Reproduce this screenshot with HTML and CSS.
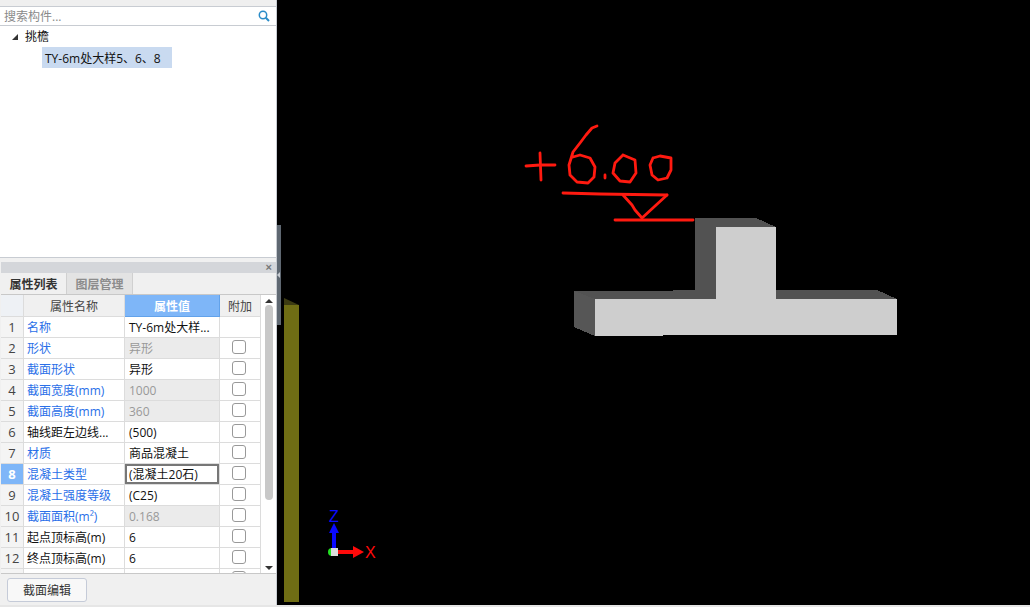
FILE: index.html
```html
<!DOCTYPE html>
<html lang="en">
<head>
  <meta charset="UTF-8" />
  <title>构件属性</title>
  <link rel="stylesheet" href="styles.css">
</head>
<body>
  <div class="main">
    <div class="side">
      <div class="top-strip"></div>
      <div class="search">
        <span class="search-text">搜索构件...</span>
        <svg class="search-icon" width="12" height="12" viewBox="0 0 12 12">
          <circle cx="5" cy="5" r="3.7" fill="none" stroke="#2a8cc8" stroke-width="1.5"/>
          <path d="M7.8 7.8 L11 11" stroke="#2a8cc8" stroke-width="2"/>
        </svg>
      </div>

      <div class="tree">
        <div class="tree-root"><span class="tree-arrow"></span>挑檐</div>
        <div class="tree-item">TY-6m处大样5、6、8</div>
      </div>

      <div class="panel-gap"></div>

      <div class="panel">
        <div class="panel-title"><span class="panel-close">×</span></div>
        <div class="tabs">
          <div class="tab active">属性列表</div>
          <div class="tab">图层管理</div>
        </div>

        <div class="grid-wrap">
          <div class="grid-clip">
            <table class="props">
              <colgroup>
                <col class="col-num"><col class="col-name"><col class="col-val"><col class="col-add">
              </colgroup>
              <tr class="head">
                <th></th><th>属性名称</th><th class="head-val">属性值</th><th>附加</th>
              </tr>
              <tr><td class="num">1</td><td class="name">名称</td><td class="val">TY-6m处大样...</td><td></td></tr>
              <tr><td class="num">2</td><td class="name">形状</td><td class="val off">异形</td><td class="add"><input type="checkbox"></td></tr>
              <tr><td class="num">3</td><td class="name">截面形状</td><td class="val">异形</td><td class="add"><input type="checkbox"></td></tr>
              <tr><td class="num">4</td><td class="name">截面宽度(mm)</td><td class="val off">1000</td><td class="add"><input type="checkbox"></td></tr>
              <tr><td class="num">5</td><td class="name">截面高度(mm)</td><td class="val off">360</td><td class="add"><input type="checkbox"></td></tr>
              <tr><td class="num">6</td><td class="name plain">轴线距左边线...</td><td class="val">(500)</td><td class="add"><input type="checkbox"></td></tr>
              <tr><td class="num">7</td><td class="name">材质</td><td class="val">商品混凝土</td><td class="add"><input type="checkbox"></td></tr>
              <tr><td class="num current">8</td><td class="name">混凝土类型</td><td class="val editing">(混凝土20石)</td><td class="add"><input type="checkbox"></td></tr>
              <tr><td class="num">9</td><td class="name">混凝土强度等级</td><td class="val">(C25)</td><td class="add"><input type="checkbox"></td></tr>
              <tr><td class="num">10</td><td class="name">截面面积(m²)</td><td class="val off">0.168</td><td class="add"><input type="checkbox"></td></tr>
              <tr><td class="num">11</td><td class="name plain">起点顶标高(m)</td><td class="val">6</td><td class="add"><input type="checkbox"></td></tr>
              <tr><td class="num">12</td><td class="name plain">终点顶标高(m)</td><td class="val">6</td><td class="add"><input type="checkbox"></td></tr>
              <tr><td class="num"></td><td class="name"></td><td class="val"></td><td class="add"><input type="checkbox"></td></tr>
            </table>
          </div>
          <div class="scroll">
            <span class="scroll-up"></span>
            <span class="scroll-thumb"></span>
            <span class="scroll-down"></span>
          </div>
        </div>

        <div class="panel-foot">
          <button class="btn">截面编辑</button>
        </div>
      </div>
    </div>

    <div class="divider"><span class="divider-handle"></span></div>

    <div class="view">
      <svg class="scene" width="748" height="605" viewBox="282 0 748 605">
        <!-- olive wall at the left edge -->
        <polygon points="284,298 299,305 284,305" fill="#3c3b12"/>
        <rect x="284" y="305" width="15" height="297" fill="#6f6d14"/>

        <!-- T section -->
        <g shape-rendering="crispEdges">
          <polygon points="574,291 650,291 695,290 695,218 756,218 776,227 716,227 716,299 595,299" fill="#525252"/>
          <polygon points="574,291 595,299 595,336 574,327" fill="#565656"/>
          <polygon points="776,290 877,290 897,299 776,299" fill="#525252"/>
          <polygon points="595,299 716,299 716,227 776,227 776,299 897,299 897,335 663,335 663,336 595,336" fill="#cecece"/>
        </g>

        <!-- hand written level mark -->
        <g fill="none" stroke="#ff1a10" stroke-width="2.8" stroke-linejoin="round" stroke-linecap="round">
          <polyline points="526,166 540,165 555,165"/>
          <polyline points="540,153 541,180"/>
          <polyline points="597,126 592,128 586,135 580,143 573,152 569,165 570,175 577,182 588,183 594,177 595,167 590,158 580,155 573,157"/>
          <polyline points="605,175 605,178"/>
          <polyline points="623,155 615,163 613,173 620,181 630,182 636,173 635,160 623,155"/>
          <polyline points="653,158 650,165 652,175 658,180 667,178 671,170 671,158 660,156 653,158"/>
          <polyline points="563,193 600,194 667,195"/>
          <polyline points="623,195 632,205 635,210 642,218 667,195"/>
          <polyline points="615,220 693,220"/>
        </g>

        <!-- axis gizmo -->
        <circle cx="332" cy="552" r="4" fill="#22e022"/>
        <rect x="332" y="530" width="4" height="18" fill="#0a0aff"/>
        <polygon points="334,523 329,533 339,533" fill="#0a0aff"/>
        <rect x="338" y="550" width="16" height="4" fill="#ff0a0a"/>
        <polygon points="353,546 364,552 353,558" fill="#ff0a0a"/>
        <rect x="331" y="548" width="7" height="8" fill="#dcdcdc"/>
        <text class="axis-label" x="329" y="522" fill="#0a0aff">Z</text>
        <text class="axis-label" x="365" y="558" fill="#ff0a0a">X</text>
      </svg>
    </div>
  </div>
  <div class="status"></div>
</body>
</html>
```

FILE: styles.css
```css
html, body {
  margin: 0;
  padding: 0;
  height: 100%;
  overflow: hidden;
}

body {
  display: flex;
  flex-direction: column;
  background-color: #000;
  font-family: "Open Sans", "Noto Sans CJK SC", sans-serif;
  font-size: 12px;
  color: #222;
}

.main {
  display: flex;
  height: 605px;
}

.status {
  height: 2px;
  background-color: #e6e6e6;
}

/* left column */
.side {
  width: 277px;
  box-sizing: border-box;
  border-right: 1px solid #c8ccd2;
  background-color: #f0f0f0;
  display: flex;
  flex-direction: column;
}

.top-strip {
  height: 6px;
  background-color: #efefef;
  border-bottom: 1px solid #c8ccd2;
}

.search {
  height: 18px;
  background-color: #fff;
  border-bottom: 1px solid #c8ccd2;
  display: flex;
  align-items: center;
  justify-content: space-between;
  padding: 0 6px 0 4px;
}

.search-text {
  color: #8a8a8a;
}

.search-icon {
  display: block;
}

.tree {
  height: 231px;
  background-color: #fff;
  border-bottom: 1px solid #c8ccd2;
  padding-left: 12px;
}

.tree-root {
  height: 21px;
  line-height: 21px;
  color: #111;
  display: flex;
  align-items: center;
}

.tree-arrow {
  width: 0;
  height: 0;
  margin-right: 7px;
  border-left: 6px solid transparent;
  border-bottom: 6px solid #333;
}

.tree-item {
  width: 127px;
  height: 21px;
  line-height: 23px;
  margin-left: 30px;
  padding-left: 3px;
  background-color: #c9daf0;
  color: #111;
}

.panel-gap {
  height: 4px;
}

.panel {
  flex: 1;
  display: flex;
  flex-direction: column;
  padding-left: 1px;
}

.panel-title {
  height: 11px;
  background-color: #d4d6da;
  display: flex;
  justify-content: flex-end;
  align-items: center;
  padding-right: 4px;
}

.panel-close {
  font-family: "Liberation Sans", sans-serif;
  font-size: 11px;
  line-height: 11px;
  font-weight: bold;
  color: #777;
}

.tabs {
  height: 21px;
  display: flex;
  border-bottom: 1px solid #c8c8c8;
}

.tab {
  width: 65px;
  line-height: 23px;
  text-align: center;
  font-weight: bold;
  color: #8c8c8c;
  background-color: #e3e3e3;
  border-right: 1px solid #d0d0d0;
}

.tab.active {
  color: #333;
  background-color: #f0f0f0;
}

.grid-wrap {
  height: 278px;
  display: flex;
  background-color: #fff;
  border-bottom: 1px solid #c8c8c8;
}

.grid-clip {
  width: 260px;
  overflow: hidden;
}

/* property grid */
.props {
  width: 260px;
  margin-left: -1px;
  border-collapse: collapse;
  table-layout: fixed;
}

.col-num { width: 23px; }
.col-name { width: 101px; }
.col-val { width: 95px; }
.col-add { width: 41px; }

.props tr {
  height: 21px;
}

.props td, .props th {
  padding: 1px 0 0;
  border: 1px solid #dcdcdc;
  border-top: 0;
  white-space: nowrap;
  overflow: hidden;
}

.props th {
  font-weight: normal;
  color: #444;
  background-color: #f0f0f0;
}

.props th:first-child {
  background-color: #eef1f5;
}

.props th.head-val {
  color: #fff;
  font-weight: bold;
  background-color: #7eb6f8;
  border-color: #62a2ea;
}

.props td.num {
  font-size: 13px;
  text-align: center;
  color: #444;
  background-color: #f4f4f4;
}

.props td.num.current {
  color: #fff;
  font-weight: bold;
  background-color: #7eb6f8;
}

.props td.name {
  padding-left: 3px;
  color: #2a6fe8;
}

.props td.name.plain {
  color: #111;
}

.props td.val {
  padding-left: 4px;
  color: #111;
}

.props td.val.off {
  color: #999;
  background-color: #ebebeb;
}

.props td.val.editing {
  box-shadow: inset 0 0 0 2px #777;
}

.props td.add {
  padding: 0 2px 0 0;
  text-align: center;
}

.add input {
  appearance: none;
  display: block;
  width: 14px;
  height: 14px;
  margin: -2px auto 0;
  background-color: #fff;
  border: 1px solid #999;
  border-radius: 3px;
  box-sizing: border-box;
}

/* scrollbar */
.scroll {
  flex: 1;
  display: flex;
  flex-direction: column;
  align-items: center;
  background-color: #fff;
}

.scroll-up, .scroll-down {
  width: 0;
  height: 0;
  border-left: 4px solid transparent;
  border-right: 4px solid transparent;
}

.scroll-up {
  margin-top: 4px;
  border-bottom: 4px solid #333;
}

.scroll-down {
  margin-top: 66px;
  border-top: 4px solid #333;
}

.scroll-thumb {
  width: 8px;
  height: 195px;
  margin-top: 2px;
  background-color: #c8c8c8;
  border-radius: 4px;
}

.panel-foot {
  flex: 1;
  padding: 4px 0 0 6px;
}

.btn {
  display: block;
  width: 80px;
  height: 24px;
  padding: 0;
  font-family: inherit;
  font-size: 12px;
  color: #333;
  background-color: #f8f8f8;
  border: 1px solid #c5cbd8;
  border-radius: 3px;
}

/* splitter */
.divider {
  width: 5px;
  background-color: #000;
}

.divider-handle {
  display: flex;
  align-items: center;
  width: 4px;
  height: 100px;
  margin-top: 225px;
  background-color: #5f6872;
}

.divider-handle::before {
  content: "";
  border-top: 3px solid transparent;
  border-bottom: 3px solid transparent;
  border-right: 3px solid #c8ccd2;
}

/* 3d view */
.view {
  flex: 1;
  background-color: #000;
}

.scene {
  display: block;
}

.axis-label {
  font-family: "Liberation Sans", sans-serif;
  font-size: 16px;
}
```
